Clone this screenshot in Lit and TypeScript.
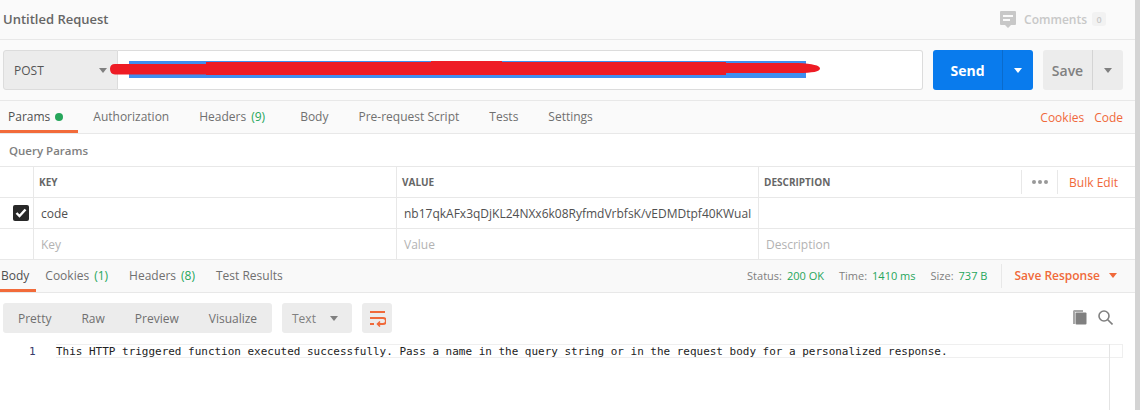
import { LitElement, html, css } from "lit";
import { customElement } from "lit/decorators.js";

const caret = (c: string) => html`<svg width="8" height="5" viewBox="0 0 8 5"><path d="M0 0h8L4 5z" fill="${c}"/></svg>`;

@customElement("app-root")
export class AppRoot extends LitElement {
  static styles = css`
    :host { display: block; width: 1140px; height: 410px; overflow: hidden; position: relative; background: #fff;
      font-family: "Open Sans", sans-serif; font-size: 12px; color: #505050; }
    * { box-sizing: border-box; }
    .page { width: 1135px; height: 410px; background: #fff; }
    .scroll { position: absolute; right: 0; top: 0; bottom: 0; width: 5px; background: #d4d4d4; }
    .top { height: 40px; background: #fafafa; border-bottom: 1px solid #e8e8e8; display: flex; align-items: center; padding: 0 29px 1px 3px; }
    .title { font-size: 13px; font-weight: 600; color: #666; flex: 1; }
    .comments { display: flex; align-items: center; color: #c8c8c8; font-weight: 600; font-size: 12px; }
    .comments svg { margin-right: 8px; }
    .count { margin-left: 5px; width: 14px; height: 14px; border-radius: 3px; background: #f2f2f2; font-size: 9px; display: flex; align-items: center; justify-content: center; }
    .urlrow { height: 61px; background: #fafafa; border-bottom: 1px solid #e8e8e8; padding: 10px 12px 10px 3px; display: flex; position: relative; }
    .method { width: 115px; height: 40px; background: #ececec; border: 1px solid #dcdcdc; border-radius: 3px 0 0 3px; display: flex; align-items: center; justify-content: space-between; padding: 0 10px 0 10px; font-size: 12px; color: #555; }
    .url { width: 805px; height: 40px; background: #fff; border: 1px solid #dcdcdc; border-left: 0; border-radius: 0 3px 3px 0; margin-right: 10px; }
    .send { width: 100px; height: 40px; background: #097bed; border-radius: 3px; display: flex; color: #fff; font-weight: 700; font-size: 14px; margin-right: 10px; }
    .send span, .save span { display: flex; align-items: center; justify-content: center; }
    .send .l { width: 70px; border-right: 1px solid #0a6bcc; }
    .send .r { flex: 1; }
    .save { width: 80px; height: 40px; background: #ececec; border-radius: 3px; display: flex; color: #808080; font-weight: 600; font-size: 14px; }
    .save .l { width: 50px; border-right: 1px solid #d4d4d4; }
    .save .r { flex: 1; }
    .select { position: absolute; left: 129px; top: 21px; width: 677px; height: 17px; background: #3f8ff0; }
    .scribble { position: absolute; left: 108px; top: 18px; }
    .tabs { display: flex; height: 33px; background: #fafafa; border-bottom: 1px solid #e8e8e8; align-items: stretch; position: relative; }
    .tab { display: flex; align-items: center; color: #707070; white-space: nowrap; padding-bottom: 1px; }
    .tab.active { color: #505050; border-bottom: 3px solid #f26b3a; padding-top: 2px; padding-bottom: 0; }
    .reqtabs { gap: 30px; padding-right: 12px; }
    .reqtabs .active { padding: 2px 15px 0 8px; margin-right: -15px; }
    .gap5 { margin-right: 5px; }
    .green { color: #26a65b; margin-left: 5px; }
    .dot { width: 8px; height: 8px; border-radius: 50%; background: #26a65b; margin-left: 5px; }
    .spacer { flex: 1; }
    .links { display: flex; gap: 10px; align-items: center; color: #f0693a; }
    .qp { height: 32px; display: flex; align-items: center; padding: 0 0 0 9px; font-weight: 600; font-size: 11.5px; color: #808080; }
    .grid { display: grid; grid-template-columns: 34px 363px 362px 1fr; border-top: 1px solid #e8e8e8; }
    .cell { height: 31px; border-bottom: 1px solid #e8e8e8; border-right: 1px solid #e8e8e8; display: flex; align-items: center; padding: 0 8px 0 7px; white-space: nowrap; overflow: hidden; }
    .cell.last { border-right: 0; justify-content: space-between; padding-right: 0; }
    .cell.chk { justify-content: flex-start; padding: 0 0 0 13px; }
    .hd { font-size: 10px; font-weight: 700; color: #666; padding-left: 5px; }
    .ph { color: #b3b3b3; }
    .box { width: 16px; height: 16px; background: #282828; border-radius: 2px; display: flex; align-items: center; justify-content: center; }
    .tools { display: flex; align-items: center; height: 24px; color: #f0693a; }
    .dots { width: 37px; height: 24px; border-left: 1px solid #e8e8e8; border-right: 1px solid #e8e8e8; display: flex; gap: 2px; align-items: center; justify-content: center; }
    .dots i { width: 4px; height: 4px; border-radius: 50%; background: #999; }
    .bulk { padding: 0 17px 0 11px; font-size: 12px; font-weight: 400; }
    .restabs { height: 33px; background: #f9f9f9; }
    .restabs .active { padding: 2px 7px 0 1px; }
    .restabs .tab.n { margin-left: 9px; }
    .restabs .tab.m { margin-left: 21px; }
    .meta { display: flex; align-items: center; font-size: 11px; color: #808080; padding-bottom: 1px; }
    .meta b { font-weight: 400; color: #26a65b; margin-left: 5px; margin-right: 15px; }
    .meta b.end { margin-right: 14px; }
    .sr { border-left: 1px solid #e8e8e8; height: 24px; padding: 0 18px 0 12px; display: flex; align-items: center; gap: 9px; color: #f0693a; font-weight: 600; font-size: 12px; }
    .bar { display: flex; height: 30px; margin: 10px 0 0 3px; align-items: center; color: #707070; }
    .seg { display: flex; width: 269px; height: 30px; background: #ececec; border-radius: 3px; align-items: center; padding-left: 15px; gap: 30px; margin-right: 10px; }
    .fmt { width: 70px; height: 30px; background: #ececec; border-radius: 3px; display: flex; align-items: center; justify-content: space-between; padding: 0 14px 0 10px; margin-right: 10px; color: #808080; }
    .wrap { width: 30px; height: 30px; background: #ececec; border-radius: 3px; display: flex; align-items: center; justify-content: center; margin-right: 680px; }
    .bar svg.ic { margin-right: 11px; margin-bottom: 2px; }
    .code { position: relative; margin-top: 11px; height: 14px; display: flex; align-items: center; font-family: "DejaVu Sans Mono", monospace; font-size: 10.97px; color: #222; }
    .ln { width: 56px; padding-left: 29px; color: #3a3a6a; }
    .line { flex: 0 0 1067px; height: 14px; border: 1px solid #efefef; border-left: 0; display: flex; align-items: center; white-space: pre; }
    .guide { position: absolute; left: 1109px; top: 0; height: 70px; width: 1px; background: #e4e4e4; }
  `;
  render() {
    return html`<div class="page">
      <div class="top">
        <div class="title">Untitled Request</div>
        <div class="comments">
          <svg width="16" height="17" viewBox="0 0 16 17"><path fill-rule="evenodd" d="M1 0h14a1 1 0 0 1 1 1v12a1 1 0 0 1-1 1h-4l-3 3-3-3H1a1 1 0 0 1-1-1V1a1 1 0 0 1 1-1zM3 4v2h10V4zm0 4v2h7V8z" fill="#c8c8c8"/></svg>
          Comments<span class="count">0</span>
        </div>
      </div>
      <div class="urlrow">
        <div class="method"><span>POST</span>${caret("#808080")}</div>
        <div class="url"></div>
        <div class="send"><span class="l">Send</span><span class="r">${caret("#fff")}</span></div>
        <div class="save"><span class="l">Save</span><span class="r">${caret("#808080")}</span></div>
        <div class="select"></div>
        <svg class="scribble" width="716" height="20" viewBox="0 0 716 20">
          <path d="M7 6H98V4H323V3H394V4H618V5H690Q712 6 712 10.5T690 15H618V17H98V16.5H7Q2 16 2 11T7 6Z" fill="#ee1c25"/>
        </svg>
      </div>
      <div class="tabs reqtabs">
        <div class="tab active">Params<span class="dot"></span></div>
        <div class="tab">Authorization</div>
        <div class="tab gap5">Headers<span class="green">(9)</span></div>
        <div class="tab">Body</div>
        <div class="tab">Pre-request Script</div>
        <div class="tab">Tests</div>
        <div class="tab">Settings</div>
        <div class="spacer"></div>
        <div class="links"><span>Cookies</span><span>Code</span></div>
      </div>
      <div class="qp">Query Params</div>
      <div class="grid">
        <div class="cell"></div>
        <div class="cell hd">KEY</div>
        <div class="cell hd">VALUE</div>
        <div class="cell hd last"><span>DESCRIPTION</span>
          <div class="tools"><div class="dots"><i></i><i></i><i></i></div><div class="bulk">Bulk Edit</div></div>
        </div>
        <div class="cell chk"><div class="box"><svg width="12" height="10" viewBox="0 0 12 10"><path d="M1.5 5l3 3 6-6.5" fill="none" stroke="#fff" stroke-width="2.4"/></svg></div></div>
        <div class="cell">code</div>
        <div class="cell">nb17qkAFx3qDjKL24NXx6k08RyfmdVrbfsK/vEDMDtpf40KWuaI</div>
        <div class="cell last"></div>
        <div class="cell"></div>
        <div class="cell ph">Key</div>
        <div class="cell ph">Value</div>
        <div class="cell ph last">Description</div>
      </div>
      <div class="tabs restabs">
        <div class="tab active">Body</div>
        <div class="tab n">Cookies<span class="green">(1)</span></div>
        <div class="tab m">Headers<span class="green">(8)</span></div>
        <div class="tab m">Test Results</div>
        <div class="spacer"></div>
        <div class="meta">Status:<b>200 OK</b>Time:<b>1410 ms</b>Size:<b class="end">737 B</b>
          <div class="sr">Save Response ${caret("#f0693a")}</div>
        </div>
      </div>
      <div class="bar">
        <div class="seg"><span>Pretty</span><span>Raw</span><span>Preview</span><span>Visualize</span></div>
        <div class="fmt"><span>Text</span>${caret("#808080")}</div>
        <div class="wrap"><svg width="17" height="17" viewBox="0 0 17 17" fill="none" stroke="#f0693a" stroke-width="2"><path d="M1 2h15M1 8h13a2 2 0 0 1 0 6H9M1 14h4"/><path d="M11 11.5l-2.5 2.5 2.5 2.5" stroke-width="1.6"/></svg></div>
        <svg class="ic" width="15" height="15" viewBox="0 0 15 15"><path d="M2 0h9v2H4a1 1 0 0 0-1 1v11H1V1z" fill="#a8a8a8"/><rect x="3.5" y="2.5" width="11" height="12" rx="1" fill="#808080"/></svg>
        <svg class="ic" width="15" height="15" viewBox="0 0 15 15" fill="none" stroke="#808080" stroke-width="1.6"><circle cx="6" cy="6" r="5"/><path d="M9.5 9.5l5 5"/></svg>
      </div>
      <div class="code">
        <span class="ln">1</span>
        <div class="line">This HTTP triggered function executed successfully. Pass a name in the query string or in the request body for a personalized response.</div>
        <div class="guide"></div>
      </div>
    </div>
    <div class="scroll"></div>`;
  }
}
